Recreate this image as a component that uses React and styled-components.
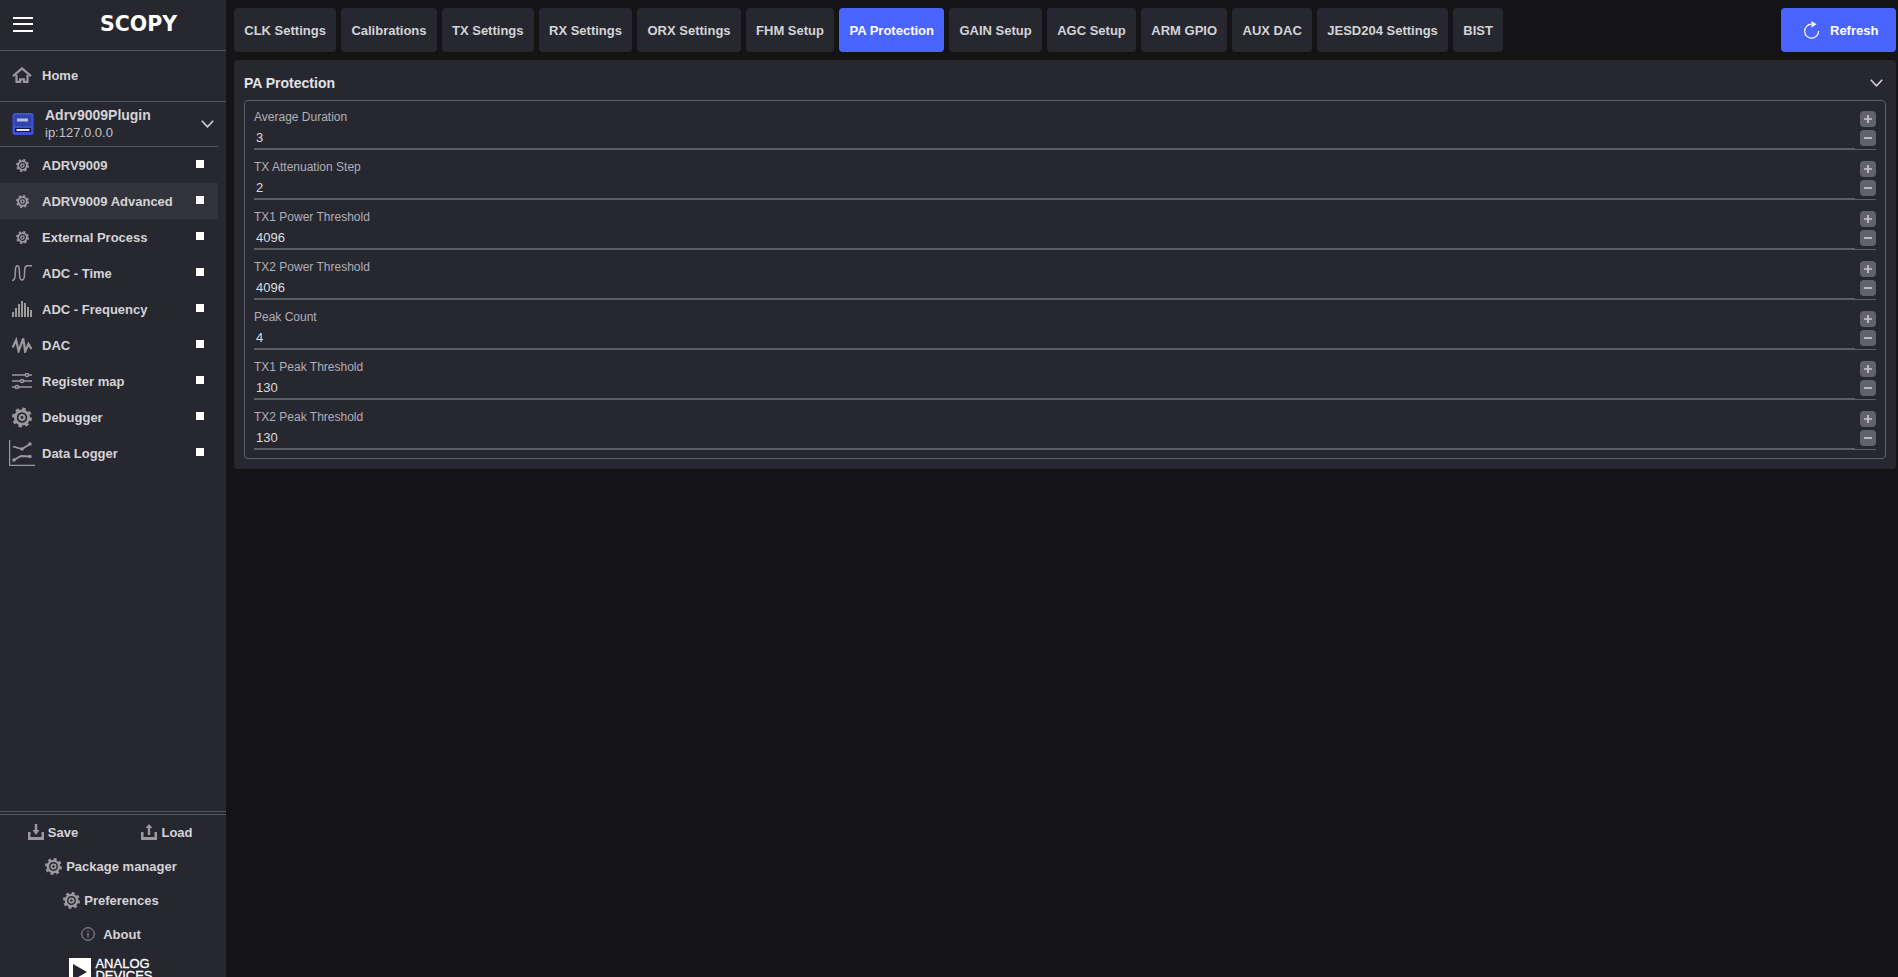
import React from "react";
import styled, { createGlobalStyle } from "styled-components";

const GlobalStyle = createGlobalStyle`
  html, body {
    margin: 0;
    padding: 0;
    height: 100%;
    background: #141416;
    overflow: hidden;
  }
  * { box-sizing: border-box; }
`;

const Page = styled.div`
  width: 100vw;
  height: 100vh;
  display: flex;
  font-family: "Liberation Sans", Arial, sans-serif;
  color: #d4d4d6;
  background: #141416;
`;

/* Left side bar */
const Sidebar = styled.aside`
  width: 226px;
  height: 100%;
  flex-shrink: 0;
  display: flex;
  flex-direction: column;
  background: #272730;
  overflow: hidden;
`;

const TopBar = styled.div`
  height: 51px;
  flex-shrink: 0;
  display: flex;
  align-items: center;
  padding: 0 0 2px 13px;
  border-bottom: 1px solid #56565f;
`;

const Hamburger = styled.div`
  width: 20px;
  height: 15px;
  border-top: 2px solid #fff;
  border-bottom: 2px solid #fff;
  position: relative;
  &::after {
    content: "";
    position: absolute;
    left: 0;
    right: 0;
    top: 4.5px;
    height: 2px;
    background: #fff;
  }
`;

const Logo = styled.div`
  margin-left: 67px;
  font-family: "DejaVu Sans", sans-serif;
  font-weight: bold;
  font-size: 20.5px;
  line-height: 20px;
  color: #fff;
`;

const HomeRow = styled.div`
  height: 51px;
  flex-shrink: 0;
  display: flex;
  align-items: center;
  gap: 10px;
  padding: 0 0 2px 12px;
  border-bottom: 1px solid #56565f;
  font-size: 13px;
  font-weight: bold;
`;

const IconBox = styled.div`
  width: 20px;
  flex-shrink: 0;
  display: flex;
  justify-content: center;
  align-items: center;
  color: #9a9a9d;
`;

const DeviceRow = styled.div`
  width: 218px;
  height: 45px;
  flex-shrink: 0;
  display: flex;
  align-items: center;
  padding: 0 4px 0 12px;
  border-bottom: 1px solid #56565f;
`;

const DeviceText = styled.div`
  margin-left: 11px;
  flex: 1;
  display: flex;
  flex-direction: column;
`;

const DeviceName = styled.div`
  font-size: 14px;
  line-height: 18px;
  font-weight: bold;
`;

const DeviceAddress = styled.div`
  font-size: 13px;
  line-height: 18px;
  color: #c4c4c6;
`;

const NavList = styled.div`
  flex: 1;
  min-height: 0;
`;

const NavRow = styled.div`
  width: 218px;
  height: 36px;
  display: flex;
  align-items: center;
  gap: 10px;
  padding: 0 14px 0 12px;
  font-size: 13px;
  font-weight: bold;
  background: ${(p) => (p.$active ? "#33333c" : "transparent")};
`;

const NavLabel = styled.span`
  flex: 1;
`;

const Marker = styled.span`
  width: 8px;
  height: 8px;
  margin-bottom: 2px;
  background: #fff;
`;

const Footer = styled.div`
  height: 166px;
  flex-shrink: 0;
  display: flex;
  flex-direction: column;
  padding: 3px 4px 0 0;
  border-top: 1px solid #56565f;
  position: relative;
  &::before {
    content: "";
    position: absolute;
    left: 0;
    right: 0;
    top: 2px;
    height: 1px;
    background: #56565f;
  }
`;

const SplitRow = styled.div`
  display: grid;
  flex-shrink: 0;
  grid-template-columns: 106px 122px;
`;

const FooterAction = styled.div`
  height: 34px;
  flex-shrink: 0;
  display: flex;
  align-items: center;
  justify-content: center;
  gap: ${(p) => p.$gap || 4}px;
  font-size: 13px;
  font-weight: bold;
  color: #d4d4d6;
  svg { color: #9a9a9d; }
`;

const AdiLogo = styled.div`
  margin-top: 7px;
  flex-shrink: 0;
  display: flex;
  justify-content: center;
  gap: 4px;
`;

const AdiMark = styled.div`
  width: 22px;
  height: 40px;
  background: #fff;
  flex-shrink: 0;
  display: flex;
  padding: 6px 0 0 4px;
`;

const AdiText = styled.div`
  font-size: 13px;
  line-height: 11.5px;
  color: #fff;
  -webkit-text-stroke: 0.3px #fff;
`;

/* Content to the right of the bar */
const Main = styled.main`
  flex: 1;
  min-width: 0;
  padding: 8px 2px 0 8px;
  display: flex;
  flex-direction: column;
  gap: 8px;
`;

const TabBar = styled.div`
  display: flex;
  gap: 5px;
  height: 44px;
  flex-shrink: 0;
`;

const Tab = styled.div`
  padding: 0 10.25px;
  display: flex;
  align-items: center;
  border-radius: 4px;
  font-size: 13px;
  font-weight: bold;
  white-space: nowrap;
  color: ${(p) => (p.$active ? "#fff" : "#d4d4d6")};
  background: ${(p) => (p.$active ? "#4a64ff" : "#272730")};
`;

const RefreshButton = styled.div`
  margin-left: auto;
  width: 115px;
  display: flex;
  align-items: center;
  gap: 10px;
  padding-left: 22px;
  border-radius: 4px;
  background: #4a64ff;
  color: #fff;
  font-size: 13px;
  font-weight: bold;
`;

const Panel = styled.section`
  background: #272730;
  border-radius: 4px;
  padding: 0 10px 10px;
`;

const PanelHeader = styled.div`
  height: 40px;
  display: flex;
  align-items: center;
  justify-content: space-between;
  padding: 6px 3px 0 0;
  font-size: 14px;
  font-weight: bold;
  color: #e2e2e4;
`;

const FieldBox = styled.div`
  border: 1px solid #5e5e68;
  border-radius: 4px;
  padding: 8px 9px;
  display: flex;
  flex-direction: column;
  gap: 9px;
`;

const Field = styled.div`
  height: 41px;
  display: grid;
  grid-template-columns: 1fr 16px;
  column-gap: 5px;
  border-bottom: 1px solid #5e5e68;
`;

const FieldBody = styled.div`
  height: 41px;
  border-bottom: 2px solid #5e5e68;
`;

const FieldLabel = styled.div`
  font-size: 12px;
  line-height: 16px;
  color: #b0b0b6;
`;

const FieldValue = styled.div`
  margin-top: 5px;
  padding-left: 2px;
  font-size: 13px;
  line-height: 16px;
  color: #dcdcde;
`;

const Stepper = styled.div`
  padding-top: 2px;
  display: flex;
  flex-direction: column;
  gap: 3px;
`;

const StepButton = styled.div`
  width: 16px;
  height: 16px;
  border-radius: 4px;
  background: #62626d;
  display: flex;
  align-items: center;
  justify-content: center;
`;

const Gear = ({ size = 14, teeth = 8 }) => {
  const r = 9.5;
  const dash = (2 * Math.PI * r) / (teeth * 2);
  return (
    <svg width={size} height={size} viewBox="0 0 24 24" fill="none" stroke="currentColor">
      <circle cx="12" cy="12" r={r} strokeWidth="5" strokeDasharray={`${dash} ${dash}`} />
      <circle cx="12" cy="12" r="8" strokeWidth="3.4" />
      <circle cx="12" cy="12" r="3" strokeWidth="2.6" />
    </svg>
  );
};

const HomeIcon = () => (
  <svg width="20" height="16" viewBox="0 0 20 16" fill="none" stroke="currentColor" strokeWidth="2.2">
    <path d="M1 9.2 10 1.4l9 7.8" />
    <path d="M4.5 8v6.9h3.6v-2.5h3.8v2.5h3.6V8" />
  </svg>
);

const TimeIcon = () => (
  <svg width="20" height="16" viewBox="0 0 20 16" fill="none" stroke="currentColor" strokeWidth="1.5">
    <path d="M0 15.5Q3 15.5 3.2 10L3.5 4Q3.8.8 5.5.8 7 .8 7.3 4L7.6 11Q8 15 10 15 12 15 12.4 11L12.7 4Q13 .8 15.5.8H20" />
  </svg>
);

const FreqIcon = () => (
  <svg width="20" height="16" viewBox="0 0 20 16" fill="currentColor">
    <rect x="0" y="11" width="2" height="5" />
    <rect x="3" y="7" width="2" height="9" />
    <rect x="6" y="3" width="2" height="13" />
    <rect x="9" y="0" width="2" height="16" />
    <rect x="12" y="2" width="2" height="14" />
    <rect x="15" y="6" width="2" height="10" />
    <rect x="18" y="9" width="2" height="7" />
  </svg>
);

const DacIcon = () => (
  <svg width="20" height="16" viewBox="0 0 20 16" fill="none" stroke="currentColor" strokeWidth="2.2">
    <path d="M.6 10.5 4.2 3l2.4 11L11.2 1.5l2 13L16.5 7l3 5" />
  </svg>
);

const RegisterIcon = () => (
  <svg width="20" height="16" viewBox="0 0 20 16" fill="none" stroke="currentColor" strokeWidth="1.5">
    <path d="M0 2h20M0 8h20M0 14h20" />
    <circle cx="15" cy="2" r="1.6" fill="#272730" />
    <circle cx="10" cy="8" r="1.6" fill="#272730" />
    <circle cx="5" cy="14" r="1.6" fill="#272730" />
  </svg>
);

const LoggerIcon = () => (
  <svg width="26" height="26" viewBox="0 0 26 26" fill="none" stroke="currentColor" strokeWidth="1.2" style={{ margin: "0 -3px" }}>
    <path d="M.6 0v25.4H26" />
    <path d="M4 6.5 13 9l8-5M5 20l7-4 9 .5" strokeWidth="1.8" />
    <g fill="currentColor" stroke="none">
      <circle cx="13" cy="9" r="1.7" />
      <circle cx="21" cy="4" r="1.7" />
      <circle cx="5" cy="20" r="1.7" />
      <circle cx="21" cy="16.5" r="1.7" />
    </g>
  </svg>
);

const ChipIcon = () => (
  <svg width="22" height="23" viewBox="0 0 22 23">
    <rect x="0.5" y="0" width="21" height="22" rx="2.5" fill="#3d52d6" />
    <rect x="2.5" y="2" width="17" height="11" fill="#3344a8" />
    <rect x="5" y="5.5" width="11" height="3" fill="#b4bcf0" />
    <rect x="3" y="15" width="16" height="4" fill="#14183c" />
    <rect x="4.5" y="16" width="13" height="2" fill="#e4e4ea" />
  </svg>
);

const Chevron = ({ color = "#d4d4d6" }) => (
  <svg width="13" height="8" viewBox="0 0 13 8" fill="none" stroke={color} strokeWidth="1.5">
    <path d="M.8.8 6.5 6.8 12.2.8" />
  </svg>
);

const TrayIcon = ({ up }) => (
  <svg width="16" height="16" viewBox="0 0 16 16" fill="currentColor">
    <path d="M0 8h2.5v5h11V8H16v8H0z" />
    {up ? (
      <path d="M8 0l3.5 4H9.2v7H6.8V4H4.5z" />
    ) : (
      <path d="M6.8 0h2.4v6h2.3L8 11 4.5 6h2.3z" />
    )}
  </svg>
);

const InfoIcon = () => (
  <svg width="14" height="14" viewBox="0 0 14 14" fill="none" stroke="currentColor" strokeWidth="1">
    <circle cx="7" cy="7" r="6.3" />
    <path d="M7 6v4.5M7 3.5v1.4" />
  </svg>
);

const RefreshIcon = () => (
  <svg width="17" height="18" viewBox="0 0 17 18" fill="none" stroke="#fff" strokeWidth="1.2">
    <path d="M8 3.2A7 7 0 1 0 15.6 10" />
    <path d="M8.5 0l5 3.2-5 3.2z" fill="#fff" stroke="none" />
  </svg>
);

const PlusIcon = () => (
  <svg width="8" height="8" viewBox="0 0 8 8" stroke="#c8c8cc" strokeWidth="1.7">
    <path d="M0 4h8M4 0v8" />
  </svg>
);

const MinusIcon = () => (
  <svg width="8" height="8" viewBox="0 0 8 8" stroke="#c8c8cc" strokeWidth="1.7">
    <path d="M0 4h8" />
  </svg>
);

const navItems = [
  { label: "ADRV9009", icon: <Gear size={13} /> },
  { label: "ADRV9009 Advanced", icon: <Gear size={13} />, active: true },
  { label: "External Process", icon: <Gear size={13} /> },
  { label: "ADC - Time", icon: <TimeIcon /> },
  { label: "ADC - Frequency", icon: <FreqIcon /> },
  { label: "DAC", icon: <DacIcon /> },
  { label: "Register map", icon: <RegisterIcon /> },
  { label: "Debugger", icon: <Gear size={21} /> },
  { label: "Data Logger", icon: <LoggerIcon /> },
];

const tabs = [
  "CLK Settings",
  "Calibrations",
  "TX Settings",
  "RX Settings",
  "ORX Settings",
  "FHM Setup",
  "PA Protection",
  "GAIN Setup",
  "AGC Setup",
  "ARM GPIO",
  "AUX DAC",
  "JESD204 Settings",
  "BIST",
];

const fields = [
  { label: "Average Duration", value: "3" },
  { label: "TX Attenuation Step", value: "2" },
  { label: "TX1 Power Threshold", value: "4096" },
  { label: "TX2 Power Threshold", value: "4096" },
  { label: "Peak Count", value: "4" },
  { label: "TX1 Peak Threshold", value: "130" },
  { label: "TX2 Peak Threshold", value: "130" },
];

const App = () => (
  <Page>
    <GlobalStyle />
    <Sidebar>
      <TopBar>
        <Hamburger />
        <Logo>SCOPY</Logo>
      </TopBar>
      <HomeRow>
        <IconBox>
          <HomeIcon />
        </IconBox>
        Home
      </HomeRow>
      <DeviceRow>
        <ChipIcon />
        <DeviceText>
          <DeviceName>Adrv9009Plugin</DeviceName>
          <DeviceAddress>ip:127.0.0.0</DeviceAddress>
        </DeviceText>
        <Chevron />
      </DeviceRow>
      <NavList>
        {navItems.map((item) => (
          <NavRow key={item.label} $active={item.active}>
            <IconBox>{item.icon}</IconBox>
            <NavLabel>{item.label}</NavLabel>
            <Marker />
          </NavRow>
        ))}
      </NavList>
      <Footer>
        <SplitRow>
          <FooterAction>
            <TrayIcon />
            Save
          </FooterAction>
          <FooterAction>
            <TrayIcon up />
            Load
          </FooterAction>
        </SplitRow>
        <FooterAction>
          <Gear size={17} />
          Package manager
        </FooterAction>
        <FooterAction>
          <Gear size={17} />
          Preferences
        </FooterAction>
        <FooterAction $gap={8}>
          <InfoIcon />
          About
        </FooterAction>
        <AdiLogo>
          <AdiMark>
            <svg width="14" height="16" viewBox="0 0 14 16">
              <path d="M0 0l14 8-14 8z" fill="#272730" />
            </svg>
          </AdiMark>
          <AdiText>
            ANALOG
            <br />
            DEVICES
          </AdiText>
        </AdiLogo>
      </Footer>
    </Sidebar>
    <Main>
      <TabBar>
        {tabs.map((tab) => (
          <Tab key={tab} $active={tab === "PA Protection"}>
            {tab}
          </Tab>
        ))}
        <RefreshButton>
          <RefreshIcon />
          Refresh
        </RefreshButton>
      </TabBar>
      <Panel>
        <PanelHeader>
          PA Protection
          <Chevron />
        </PanelHeader>
        <FieldBox>
          {fields.map((field) => (
            <Field key={field.label}>
              <FieldBody>
                <FieldLabel>{field.label}</FieldLabel>
                <FieldValue>{field.value}</FieldValue>
              </FieldBody>
              <Stepper>
                <StepButton>
                  <PlusIcon />
                </StepButton>
                <StepButton>
                  <MinusIcon />
                </StepButton>
              </Stepper>
            </Field>
          ))}
        </FieldBox>
      </Panel>
    </Main>
  </Page>
);

export default App;
